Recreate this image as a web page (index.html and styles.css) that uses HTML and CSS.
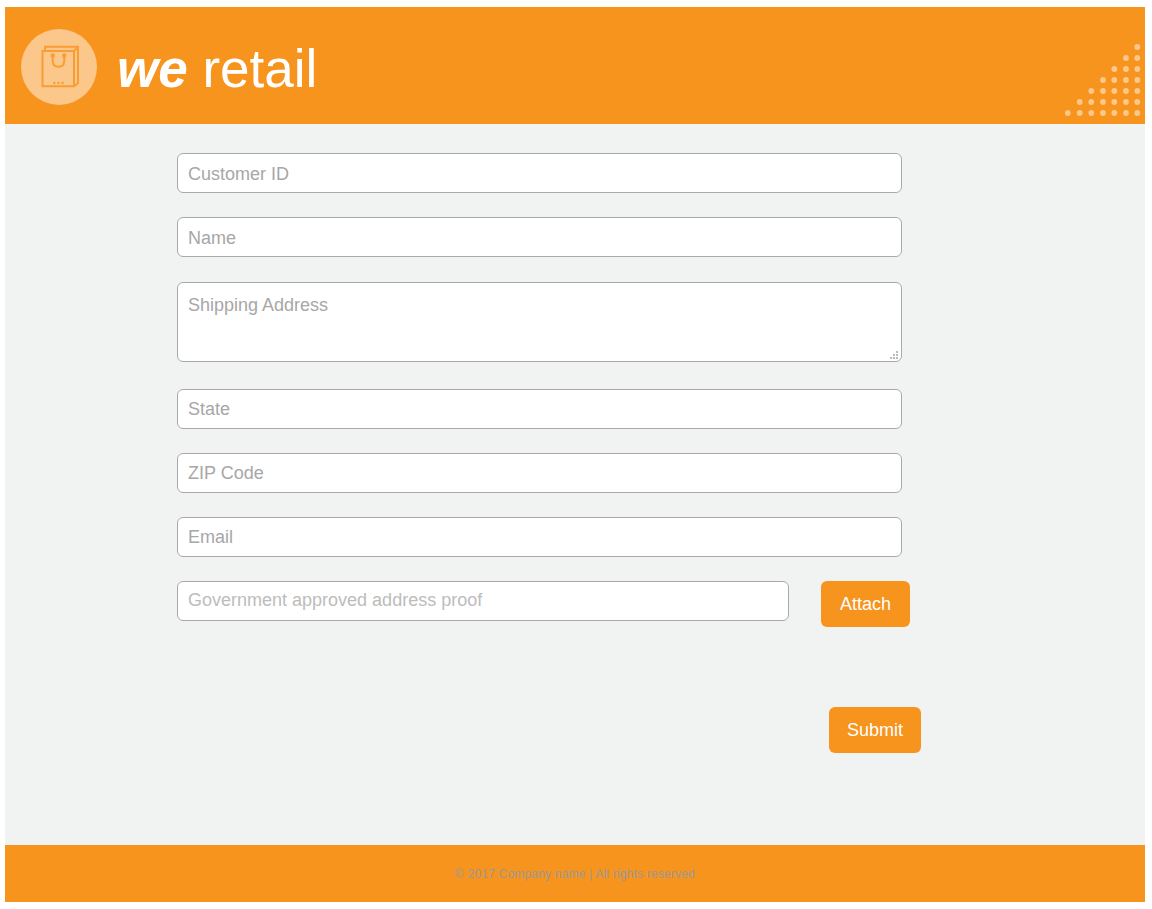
FILE: index.html
```html
<!DOCTYPE html>
<html lang="en">
<head>
<meta charset="utf-8">
<title>we retail</title>
<link rel="stylesheet" href="styles.css">
</head>
<body>
<div class="page">
  <header class="header">
    <div class="logo-circle">
      <svg class="logo-icon" width="42" height="52" viewBox="0 0 42 52" fill="none">
        <path class="bag" d="M5 9.500V5.800H38V42L34 45.200M34 10L38 6M2.500 10H34V45.200H2.500Z"/>
        <path class="bag" d="M12.700 14V19.500C12.700 23.500 15 25.800 18.500 25.800C22 25.800 24.300 23.500 24.300 19.500V14"/>
        <circle class="bag-dot" cx="12.700" cy="14.500" r="2.200"/>
        <circle class="bag-dot" cx="24.300" cy="14.500" r="2.200"/>
        <circle class="bag-dot" cx="14.300" cy="42" r="1.200"/>
        <circle class="bag-dot" cx="18.400" cy="42" r="1.200"/>
        <circle class="bag-dot" cx="22.600" cy="42" r="1.200"/>
      </svg>
    </div>
    <div class="brand"><b class="we">we</b> retail</div>
    <svg class="dots" width="80" height="76" viewBox="0 0 80 76">
      <g class="dots-fill">
        <circle cx="72.300" cy="5" r="2.900"/>
        <circle cx="61" cy="16" r="2.900"/><circle cx="72.300" cy="16" r="2.900"/>
        <circle cx="49.300" cy="27" r="2.900"/><circle cx="61" cy="27" r="2.900"/><circle cx="72.300" cy="27" r="2.900"/>
        <circle cx="38" cy="38" r="2.900"/><circle cx="49.300" cy="38" r="2.900"/><circle cx="61" cy="38" r="2.900"/><circle cx="72.300" cy="38" r="2.900"/>
        <circle cx="26.300" cy="49" r="2.900"/><circle cx="38" cy="49" r="2.900"/><circle cx="49.300" cy="49" r="2.900"/><circle cx="61" cy="49" r="2.900"/><circle cx="72.300" cy="49" r="2.900"/>
        <circle cx="14.700" cy="60" r="2.900"/><circle cx="26.300" cy="60" r="2.900"/><circle cx="38" cy="60" r="2.900"/><circle cx="49.300" cy="60" r="2.900"/><circle cx="61" cy="60" r="2.900"/><circle cx="72.300" cy="60" r="2.900"/>
        <circle cx="2.700" cy="71" r="2.900"/><circle cx="14.700" cy="71" r="2.900"/><circle cx="26.300" cy="71" r="2.900"/><circle cx="38" cy="71" r="2.900"/><circle cx="49.300" cy="71" r="2.900"/><circle cx="61" cy="71" r="2.900"/><circle cx="72.300" cy="71" r="2.900"/>
      </g>
    </svg>
  </header>
  <main class="main">
    <form class="form">
      <input class="field gap-24 nudge" type="text" placeholder="Customer ID">
      <input class="field gap-25 nudge" type="text" placeholder="Name">
      <div class="area-wrap gap-27">
        <textarea class="field area" placeholder="Shipping Address"></textarea>
        <svg class="grip" width="8" height="8" viewBox="0 0 8 8">
          <rect x="6" y="0" width="2" height="2"/>
          <rect x="3" y="3" width="2" height="2"/><rect x="6" y="3" width="2" height="2"/>
          <rect x="0" y="6" width="2" height="2"/><rect x="3" y="6" width="2" height="2"/><rect x="6" y="6" width="2" height="2"/>
        </svg>
      </div>
      <input class="field gap-24" type="text" placeholder="State">
      <input class="field gap-24" type="text" placeholder="ZIP Code">
      <input class="field gap-24" type="text" placeholder="Email">
      <div class="attach-row">
        <input class="field proof" type="text" placeholder="Government approved address proof">
        <button class="btn attach" type="button">Attach</button>
      </div>
      <div class="submit-row">
        <button class="btn submit" type="button">Submit</button>
      </div>
    </form>
  </main>
  <footer class="footer">© 2017 Company name | All rights reserved</footer>
</div>
</body>
</html>
```
FILE: styles.css
```css
* { box-sizing: border-box; }
html, body { margin: 0; background: #fff; }
body { font-family: "Liberation Sans", Arial, sans-serif; }
.page { width: 1140px; margin: 7px 0 7px 5px; }

.header {
  position: relative;
  height: 117px;
  background: #f7941d;
  display: flex;
  align-items: center;
  padding: 3px 0 0 16px;
}
.logo-circle {
  width: 76px;
  height: 76px;
  border-radius: 50%;
  background: #fbc78a;
  padding: 0 0 0 19px;
  display: flex;
  align-items: center;
  flex-shrink: 0;
}
.logo-icon { display: block; flex-shrink: 0; }
.bag { stroke: #f99d35; stroke-width: 2; }
.bag-dot { fill: #f99d35; }
.brand {
  margin: 4px 0 0 20px;
  color: #fff;
  font-size: 53px;
  line-height: 60px;
  white-space: nowrap;
}
.we { font-style: italic; }
.dots { position: absolute; right: 0; top: 35px; }
.dots-fill { fill: #fbc78a; }

.main {
  height: 721px;
  background: #f1f2f2;
  padding: 29px 0 0 172px;
}
.form { display: flex; flex-direction: column; align-items: flex-start; }
.field {
  display: block;
  width: 725px;
  height: 40px;
  margin: 0;
  padding: 0 10px;
  background: #fff;
  border: 1px solid #a9a9a9;
  border-radius: 6px;
  font-family: inherit;
  font-size: 18px;
  color: #333;
  outline: none;
}
.field::placeholder { color: #a7a7a7; opacity: 1; }
.nudge { padding-top: 2px; }
.area-wrap { position: relative; width: 725px; height: 80px; }
.area { height: 80px; padding: 12px 10px 0; line-height: 21px; resize: none; }
.grip { position: absolute; right: 4px; bottom: 3px; fill: #bbb; }
.gap-24 { margin-bottom: 24px; }
.gap-25 { margin-bottom: 25px; }
.gap-27 { margin-bottom: 27px; }
.attach-row { display: flex; align-items: flex-start; }
.proof { width: 612px; padding-bottom: 2px; }
.proof::placeholder { color: #bcbcbc; }
.btn {
  height: 46px;
  border: 0;
  border-radius: 6px;
  background: #f7941d;
  color: #fff;
  font-family: inherit;
  font-size: 18px;
  padding: 0;
}
.attach { width: 89px; margin-left: 32px; }
.submit-row { margin: 80px 0 0 652px; }
.submit { width: 92px; }

.footer {
  height: 57px;
  background: #f7941d;
  color: #999;
  font-size: 12px;
  letter-spacing: 0.19px;
  display: flex;
  align-items: center;
  justify-content: center;
}
```
